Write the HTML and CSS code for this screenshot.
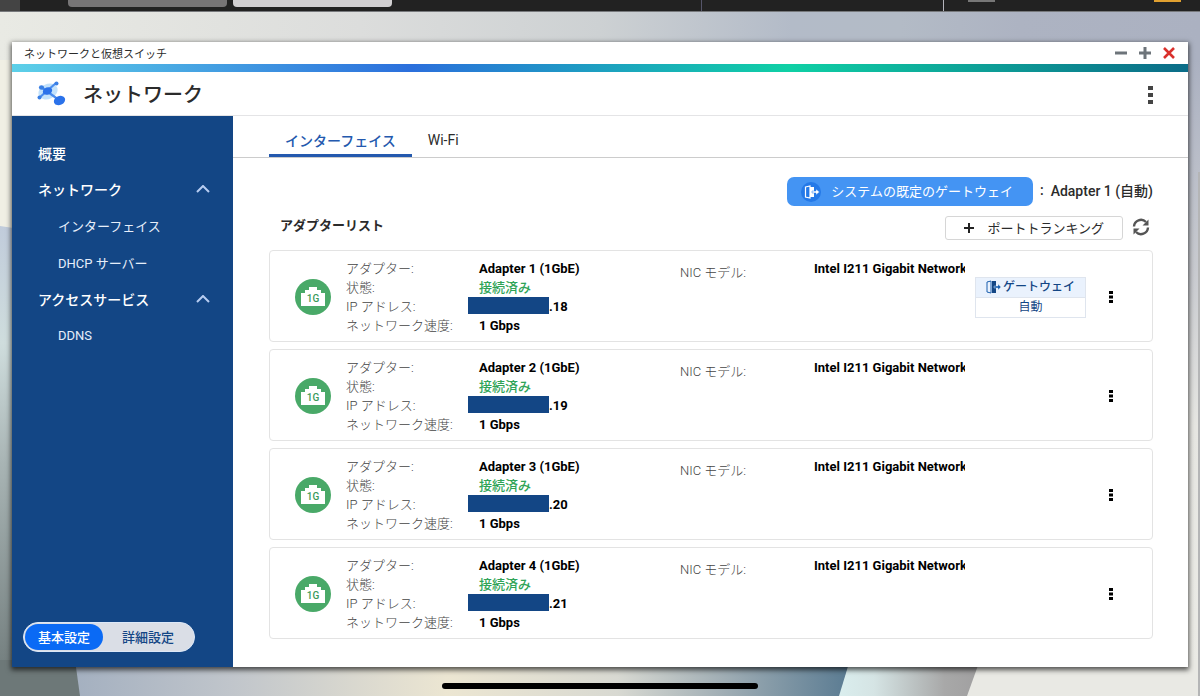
FILE: index.html
```html
<!DOCTYPE html>
<html lang="ja">
<head>
<meta charset="utf-8">
<meta name="viewport" content="width=device-width, initial-scale=1">
<title>ネットワークと仮想スイッチ</title>
<link rel="stylesheet" href="styles.css">
</head>
<body>
<svg class="wallpaper" viewBox="0 0 1200 696" preserveAspectRatio="none" aria-hidden="true">
  <defs>
    <linearGradient id="sky"><stop offset="0" stop-color="#e9eae4"/><stop offset=".3" stop-color="#dcdddc"/><stop offset=".5" stop-color="#cdd1d3"/><stop offset=".66" stop-color="#b3bbc8"/><stop offset=".75" stop-color="#b3bbc6"/><stop offset=".85" stop-color="#adb3c2"/><stop offset="1" stop-color="#abb1c1"/></linearGradient>
    <linearGradient id="left" x2="0" y2="1"><stop offset="0" stop-color="#c1ccdb"/><stop offset=".25" stop-color="#cfdddd"/><stop offset=".5" stop-color="#a9b5b5"/><stop offset="1" stop-color="#6d7878"/></linearGradient>
    <linearGradient id="right" x2="0" y2="1"><stop offset="0" stop-color="#abb1c1"/><stop offset=".35" stop-color="#c9cbd0"/><stop offset=".6" stop-color="#e6e6e2"/><stop offset="1" stop-color="#ebebe6"/></linearGradient>
    <linearGradient id="floor"><stop offset="0" stop-color="#a4b0c0"/><stop offset=".2" stop-color="#c0c5cb"/><stop offset=".48" stop-color="#ece6d2"/><stop offset=".7" stop-color="#d8d9d2"/><stop offset=".83" stop-color="#a3b0b6"/><stop offset="1" stop-color="#5a7b92"/></linearGradient>
    <linearGradient id="band"><stop offset="0" stop-color="#daeeee"/><stop offset=".25" stop-color="#d5e4e4"/><stop offset=".75" stop-color="#a8a8a8"/><stop offset="1" stop-color="#a09fa0"/></linearGradient>
  </defs>
  <rect width="1200" height="696" fill="url(#sky)"/>
  <rect y="60" width="20" height="180" fill="#f0efe4"/>
  <path d="M0 226L20 229V696H0z" fill="url(#left)"/>
  <rect x="1180" y="60" width="20" height="610" fill="url(#right)"/>
  <rect x="1198" y="172" width="2" height="524" fill="#b4b5b6"/>
  <rect y="660" width="90" height="36" fill="#6d7878"/>
  <path d="M75 660L80 696H840L850 660z" fill="url(#floor)"/>
  <path d="M850 660L839 696H968L980 660z" fill="url(#band)"/>
  <path d="M980 660L967 696H1198V660z" fill="#e9e9e4"/>
</svg>
<div class="topbar">
  <span class="corner"></span>
  <span class="task"></span>
  <span class="task task-active"></span>
  <span class="divider divider-first"></span>
  <span class="divider"></span>
  <span class="indicator"></span>
  <span class="indicator indicator-alert"></span>
</div>
<div class="desktop">
<section class="window">
  <div class="titlebar">
    <span>ネットワークと仮想スイッチ</span>
    <div class="controls">
      <button type="button" aria-label="最小化"><svg width="12" height="12"><path d="M0 6H12" stroke="#6d747a" stroke-width="3"/></svg></button>
      <button type="button" aria-label="最大化"><svg width="12" height="12"><path d="M0 6H12M6 0V12" stroke="#6d747a" stroke-width="3"/></svg></button>
      <button type="button" aria-label="閉じる"><svg width="12" height="12"><path d="M1 1L11 11M11 1L1 11" stroke="#d9302c" stroke-width="2.6"/></svg></button>
    </div>
  </div>
  <div class="rainbow"></div>
  <header class="header">
    <svg class="logo" width="30" height="26" viewBox="0 0 30 26">
      <ellipse cx="11" cy="10.500" rx="10" ry="7.500" transform="rotate(-25 11 10.500)" fill="#c3e2fb"/>
      <path d="M19 2L2 17M4 6L22 19" stroke="#4a8dee" stroke-width="2.2"/>
      <ellipse cx="10.500" cy="10" rx="4.800" ry="3.600" transform="rotate(-20 10.500 10)" fill="#2b72ea"/>
      <circle cx="19.500" cy="2.500" r="2" fill="#3a7fe4"/><circle cx="2.500" cy="16.500" r="2" fill="#3a7fe4"/>
      <ellipse cx="4.500" cy="6.500" rx="2.600" ry="2.200" fill="#3a7fe4"/>
      <ellipse cx="22.500" cy="19.500" rx="5.800" ry="4.500" transform="rotate(-25 22.500 19.500)" fill="#2b72ea"/>
    </svg>
    <h1>ネットワーク</h1>
    <button type="button" class="kebab" aria-label="メニュー"><svg width="5" height="18"><path d="M0 0h5v4H0zM0 7h5v4H0zM0 14h5v4H0z" fill="#444"/></svg></button>
  </header>
  <div class="body">
    <aside class="sidebar">
      <nav>
        <a href="#" class="top">概要</a>
        <button type="button" class="top" aria-expanded="true">ネットワーク<svg width="14" height="8"><path d="M1 7L7 1L13 7" fill="none" stroke="#b7cdf2" stroke-width="2"/></svg></button>
        <a href="#" class="sub">インターフェイス</a>
        <a href="#" class="sub">DHCP サーバー</a>
        <button type="button" class="top" aria-expanded="true">アクセスサービス<svg width="14" height="8"><path d="M1 7L7 1L13 7" fill="none" stroke="#b7cdf2" stroke-width="2"/></svg></button>
        <a href="#" class="sub">DDNS</a>
      </nav>
      <div class="mode">
        <button type="button" class="selected" aria-pressed="true">基本設定</button>
        <button type="button" aria-pressed="false">詳細設定</button>
      </div>
    </aside>
    <main class="main">
      <div class="tabs" role="tablist">
        <button type="button" role="tab" aria-selected="true">インターフェイス</button>
        <button type="button" role="tab" aria-selected="false">Wi-Fi</button>
      </div>
      <div class="content">
        <div class="gateway-row">
          <button type="button" class="gateway-button">
            <svg width="20" height="20" viewBox="0 0 20 20"><circle cx="10" cy="10" r="10" fill="#2479e8"/><path d="M4.500 5L9 4V16L4.500 15z" fill="none" stroke="#fff" stroke-width="1.200"/><path d="M9 5h4v10H9z" fill="#fff"/><path d="M11 9h4V7l3.500 3L15 13v-2h-4z" fill="#fff" stroke="#2479e8" stroke-width=".5"/></svg>
            <span>システムの既定のゲートウェイ</span>
          </button>
          <span class="colon">:</span>
          <strong>Adapter 1 (自動)</strong>
        </div>
        <div class="list-head">
          <h2>アダプターリスト</h2>
          <button type="button" class="trunk"><svg width="10" height="10"><path d="M0 5H10M5 0V10" stroke="#222" stroke-width="2"/></svg><span>ポートトランキング</span></button>
          <button type="button" class="refresh" aria-label="更新"><svg width="18" height="18" viewBox="0 0 18 18"><path d="M2 8.500A7 7 0 0 1 14 4M16 9.500A7 7 0 0 1 4 14" fill="none" stroke="#555" stroke-width="2.400"/><path d="M16.500 1.500V7.500H10.500zM1.500 16.500V10.500H7.500z" fill="#555"/></svg></button>
        </div>
        <div class="cards">
          <article class="card">
            <svg class="port" viewBox="0 0 36 36"><circle cx="18" cy="18" r="18" fill="#49a968"/><path d="M6 27V14h4v-3h4V8h8v3h4v3h4v13z" fill="#fff"/><text x="18" y="23">1G</text></svg>
            <div class="labels"><span>アダプター:</span><span>状態:</span><span>IP アドレス:</span><span>ネットワーク速度:</span></div>
            <div class="values"><span>Adapter 1 (1GbE)</span><span class="ok">接続済み</span><span class="ip"><i></i>.18</span><span>1 Gbps</span></div>
            <div class="labels nic">NIC モデル:</div>
            <div class="values model">Intel I211 Gigabit Network</div>
            <div class="badge"><div><svg width="15" height="14" viewBox="0 0 15 14"><path d="M1 2L5 1V13L1 12z" fill="none" stroke="#1a5fae"/><path d="M6 1h4v12H6z" fill="#134685"/><path d="M8 6h4V4l3 3-3 3V8H8z" fill="#1a5fae" stroke="#eaf2fd" stroke-width=".4"/></svg>ゲートウェイ</div><div>自動</div></div>
            <button type="button" class="more" aria-label="操作"><svg width="4" height="12"><path d="M0 0h4v3H0zM0 4.500h4v3H0zM0 9h4v3H0z"/></svg></button>
          </article>
          <article class="card">
            <svg class="port" viewBox="0 0 36 36"><circle cx="18" cy="18" r="18" fill="#49a968"/><path d="M6 27V14h4v-3h4V8h8v3h4v3h4v13z" fill="#fff"/><text x="18" y="23">1G</text></svg>
            <div class="labels"><span>アダプター:</span><span>状態:</span><span>IP アドレス:</span><span>ネットワーク速度:</span></div>
            <div class="values"><span>Adapter 2 (1GbE)</span><span class="ok">接続済み</span><span class="ip"><i></i>.19</span><span>1 Gbps</span></div>
            <div class="labels nic">NIC モデル:</div>
            <div class="values model">Intel I211 Gigabit Network</div>
            <button type="button" class="more" aria-label="操作"><svg width="4" height="12"><path d="M0 0h4v3H0zM0 4.500h4v3H0zM0 9h4v3H0z"/></svg></button>
          </article>
          <article class="card">
            <svg class="port" viewBox="0 0 36 36"><circle cx="18" cy="18" r="18" fill="#49a968"/><path d="M6 27V14h4v-3h4V8h8v3h4v3h4v13z" fill="#fff"/><text x="18" y="23">1G</text></svg>
            <div class="labels"><span>アダプター:</span><span>状態:</span><span>IP アドレス:</span><span>ネットワーク速度:</span></div>
            <div class="values"><span>Adapter 3 (1GbE)</span><span class="ok">接続済み</span><span class="ip"><i></i>.20</span><span>1 Gbps</span></div>
            <div class="labels nic">NIC モデル:</div>
            <div class="values model">Intel I211 Gigabit Network</div>
            <button type="button" class="more" aria-label="操作"><svg width="4" height="12"><path d="M0 0h4v3H0zM0 4.500h4v3H0zM0 9h4v3H0z"/></svg></button>
          </article>
          <article class="card">
            <svg class="port" viewBox="0 0 36 36"><circle cx="18" cy="18" r="18" fill="#49a968"/><path d="M6 27V14h4v-3h4V8h8v3h4v3h4v13z" fill="#fff"/><text x="18" y="23">1G</text></svg>
            <div class="labels"><span>アダプター:</span><span>状態:</span><span>IP アドレス:</span><span>ネットワーク速度:</span></div>
            <div class="values"><span>Adapter 4 (1GbE)</span><span class="ok">接続済み</span><span class="ip"><i></i>.21</span><span>1 Gbps</span></div>
            <div class="labels nic">NIC モデル:</div>
            <div class="values model">Intel I211 Gigabit Network</div>
            <button type="button" class="more" aria-label="操作"><svg width="4" height="12"><path d="M0 0h4v3H0zM0 4.500h4v3H0zM0 9h4v3H0z"/></svg></button>
          </article>
        </div>
      </div>
    </main>
  </div>
</section>
</div>
<div class="home-bar"></div>
</body>
</html>
```

FILE: styles.css
```css
* { box-sizing: border-box; }
body {
  margin: 0;
  min-height: 100vh;
  display: flex;
  flex-direction: column;
  position: relative;
  font-family: Roboto, "Noto Sans CJK JP", sans-serif;
  font-size: 13px;
  color: #2b2b2b;
}
button { border: 0; padding: 0; background: none; font: inherit; color: inherit; cursor: pointer; }
a { color: inherit; text-decoration: none; }
svg { display: block; flex: none; }
h1, h2 { margin: 0; }

.wallpaper { position: absolute; inset: 0; width: 100%; height: 100%; z-index: -1; }
.home-bar { position: absolute; bottom: 7px; left: 50%; width: 316px; height: 6px; margin-left: -158px; border-radius: 3px; background: #000; }

.topbar { display: flex; height: 12px; background: #222; border-bottom: 1px solid #77797c; }
.corner { width: 20px; background: #444; margin-right: 48px; }
.task { width: 159px; height: 7px; margin-right: 6px; border-radius: 0 0 4px 4px; background: #777576; }
.task-active { background: #d1cfd1; }
.divider { width: 1px; margin-right: 24px; background: #b4b4bc; }
.divider-first { margin-left: auto; margin-right: 241px; background: #55556a; }
.indicator { width: 27px; height: 2px; margin-right: 159px; background: #777; }
.indicator-alert { background: #e0a030; margin-right: 19px; }

.desktop { flex: 1; display: flex; padding: 30px 12px 29px; }
.window { flex: 1; min-width: 0; display: flex; flex-direction: column; background: #fff; box-shadow: 0 2px 5px 1px rgba(0, 0, 0, .65); }
.titlebar { display: flex; align-items: center; justify-content: space-between; height: 22px; padding: 0 13px 0 12px; font-size: 11px; }
.controls { display: flex; gap: 12px; }
.rainbow { height: 8px; background: linear-gradient(90deg, #5dd0e8, #2b6fdc 34%, #0fd0a5 66%, #0b6c88); }
.header { display: flex; align-items: center; height: 44px; padding: 0 35px 0 25px; border-bottom: 1px solid #e4e4e6; }
.header h1 { flex: 1; margin-left: 16px; padding-top: 2px; font-size: 20px; font-weight: 500; line-height: 28px; }
.kebab { padding: 3px 0 0; }

.body { flex: 1; display: flex; }
.sidebar { flex: 0 0 221px; display: flex; flex-direction: column; justify-content: space-between; padding: 19px 0 15px; background: #134685; color: #fff; }
.sidebar nav { display: flex; flex-direction: column; }
.top, .sub { display: flex; align-items: center; justify-content: space-between; height: 36px; padding: 0 23px 0 26px; font-size: 14px; font-weight: 500; }
.sub { height: 37px; padding-left: 46px; font-size: 13px; font-weight: 400; color: #e6eefa; }
.mode { align-self: flex-start; display: flex; width: 172px; height: 30px; margin-left: 11px; padding: 1px; border: 1px solid #dce8f8; border-radius: 15px; background: #dadee6; color: #134685; font-weight: 500; }
.mode button { flex: 1; padding-bottom: 2px; border-radius: 14px; }
.mode .selected { flex: 0 0 78px; background: #0a6af5; color: #fff; }

.main { flex: 1; min-width: 0; }
.tabs { display: flex; height: 42px; padding-left: 36px; border-bottom: 1px solid #ccc; }
.tabs button { padding: 9px 16px 0; border-bottom: 3px solid transparent; font-size: 14px; }
.tabs [aria-selected="true"] { border-bottom-color: #2459ae; color: #2459ae; font-weight: 500; }
.content { padding: 19px 35px 20px 36px; }
.gateway-row { display: flex; align-items: center; justify-content: flex-end; gap: 7px; }
.gateway-row strong, .colon { padding-bottom: 3px; font-size: 14px; font-weight: 500; }
.gateway-button { display: flex; align-items: center; gap: 10px; height: 29px; padding: 0 20px 0 14px; border-radius: 7px; background: #4494f3; color: #fff; }
.gateway-button span, .trunk span { padding-bottom: 2px; }
.list-head { display: flex; align-items: center; height: 44px; }
.list-head h2 { flex: 1; padding: 0 0 4px 11px; font-size: 13px; font-weight: 700; line-height: 20px; }
.trunk { display: flex; align-items: center; gap: 13px; height: 24px; padding: 0 18px; border: 1px solid #d6d6d6; border-radius: 3px; }
.refresh { margin: 0 3px 2px 9px; }

.cards { display: flex; flex-direction: column; gap: 7px; }
.card {
  display: grid;
  grid-template-columns: 51px minmax(0, 133fr) minmax(0, 201fr) minmax(0, 134fr) minmax(0, 151fr) 121px 50px;
  align-items: center;
  padding: 8px 16px 6px 25px;
  border: 1px solid #e3e3e3;
  border-radius: 4px;
}
.port { width: 36px; height: 36px; }
.port text { font-size: 10px; font-weight: 500; text-anchor: middle; fill: #3b9a5a; }
.labels, .values { display: flex; flex-direction: column; line-height: 19px; white-space: nowrap; }
.labels { color: #444; font-weight: 300; }
.values { color: #000; font-weight: 700; }
.nic { align-self: start; padding-top: 4px; }
.model { align-self: start; overflow: hidden; }
.ok { color: #2fa457; font-weight: 500; }
.ip { display: flex; }
.ip i { width: 81px; height: 17px; margin-left: -11px; background: #134685; }
.badge { margin-left: 10px; border: 1px solid #dfe5ee; font-size: 12px; line-height: 19px; color: #134685; }
.badge div { display: flex; justify-content: center; align-items: center; gap: 2px; }
.badge div:first-child { background: #eaf2fd; border-bottom: 1px solid #dfe5ee; font-weight: 500; }
.more { grid-column: 7; width: 24px; height: 24px; justify-self: center; display: grid; place-items: center; }
```
